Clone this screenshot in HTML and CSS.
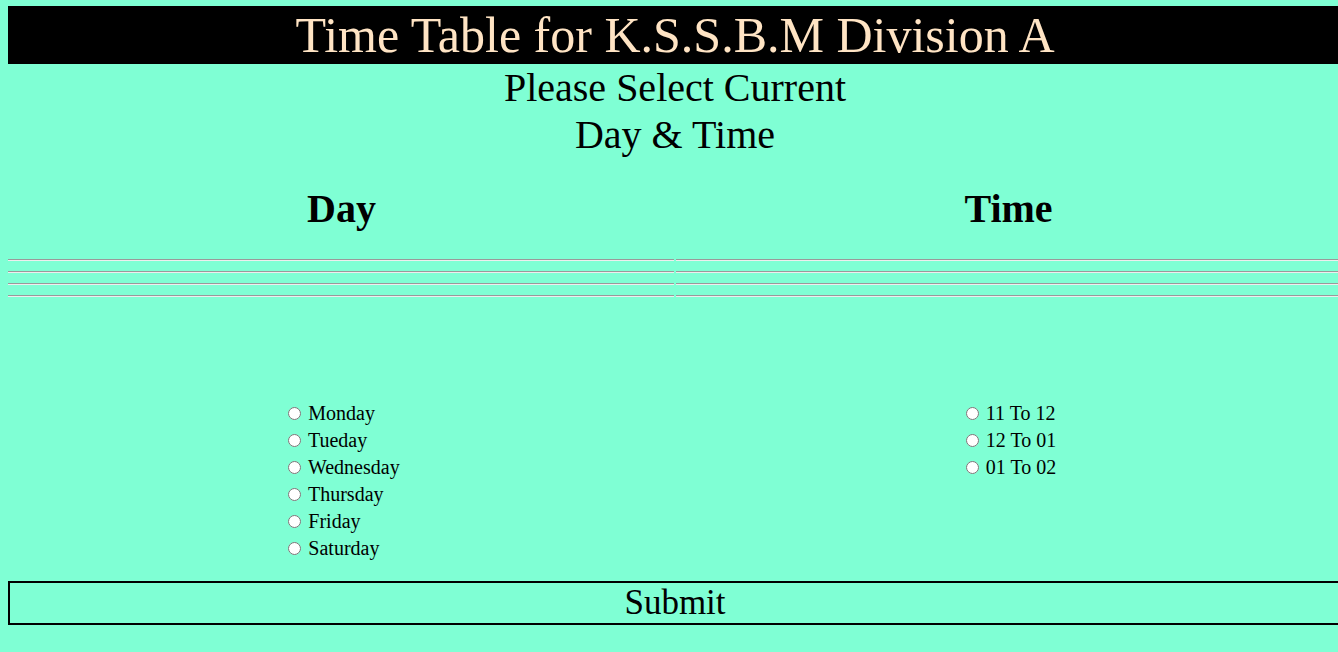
FILE: index.html
```html
<!DOCTYPE html>
<html lang="en">
<head>
<meta charset="utf-8">
<title>Time Table</title>
<link rel="stylesheet" href="styles.css">
</head>
<body>
<div class="page">
  <h1 class="title">Time Table for K.S.S.B.M Division A</h1>
  <p class="prompt">Please Select Current<br>Day &amp; Time</p>
  <form class="form">
    <div class="columns">
      <div class="col">
        <h2 class="col-head">Day</h2>
        <div class="rules"><hr><hr><hr><hr></div>
        <div class="options">
          <label class="opt"><input type="radio" name="day"> Monday</label>
          <label class="opt"><input type="radio" name="day"> Tueday</label>
          <label class="opt"><input type="radio" name="day"> Wednesday</label>
          <label class="opt"><input type="radio" name="day"> Thursday</label>
          <label class="opt"><input type="radio" name="day"> Friday</label>
          <label class="opt"><input type="radio" name="day"> Saturday</label>
        </div>
      </div>
      <div class="col">
        <h2 class="col-head">Time</h2>
        <div class="rules"><hr><hr><hr><hr></div>
        <div class="options">
          <label class="opt"><input type="radio" name="time"> 11 To 12</label>
          <label class="opt"><input type="radio" name="time"> 12 To 01</label>
          <label class="opt"><input type="radio" name="time"> 01 To 02</label>
        </div>
      </div>
    </div>
    <button type="button" class="submit">Submit</button>
  </form>
</div>
</body>
</html>
```

FILE: styles.css
```css
html {
  overflow: hidden;
  background: #7fffd4;
}
body {
  margin: 6px 0 0 8px;
  background: #7fffd4;
  font-family: "Liberation Serif", "Times New Roman", serif;
  color: #000;
}
.page {
  width: 1334px;
}
.title {
  margin: 0;
  background: #000;
  color: #ffe4c4;
  font-weight: normal;
  font-size: 50px;
  line-height: 58px;
  text-align: center;
}
.prompt {
  margin: 0;
  font-size: 40px;
  line-height: 47px;
  text-align: center;
}
.form {
  margin: 0;
}
.columns {
  display: grid;
  grid-template-columns: 1fr 1fr;
}
.col {
  display: flex;
  flex-direction: column;
  align-items: center;
}
.col-head {
  margin: 29px 0 0;
  font-size: 40px;
  line-height: 44px;
  font-weight: bold;
}
.rules {
  align-self: stretch;
  padding-top: 28px;
  display: flex;
  flex-direction: column;
  gap: 10px;
}
.rules hr {
  margin: 0;
  height: 0;
  border: none;
  border-top: 1px solid #9a9a9a;
  border-bottom: 1px solid #eeeeee;
}
.col:first-child .rules hr {
  margin-right: 1px;
}
.col:last-child .rules hr {
  margin-left: 1px;
}
.options {
  margin-top: 103px;
  display: flex;
  flex-direction: column;
}
.opt {
  display: flex;
  align-items: center;
  height: 27px;
  font-size: 20px;
  white-space: pre;
}
.opt input {
  margin: 0 2px 0 5px;
  width: 13px;
  height: 13px;
}
.submit {
  display: block;
  width: 100%;
  margin-top: 19px;
  height: 44px;
  padding: 0;
  background: #7fffd4;
  border: 2px solid #000;
  font-family: "Liberation Serif", "Times New Roman", serif;
  font-size: 35px;
  line-height: 40px;
  color: #000;
  text-align: center;
}
```
